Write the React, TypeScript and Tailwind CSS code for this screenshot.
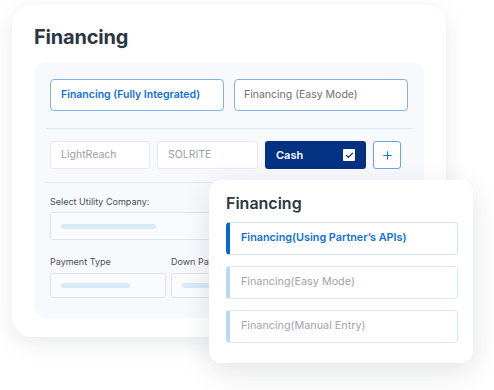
import { Check, Plus } from "lucide-react";

function Field({ className, bar }: { className: string; bar: string }) {
  return (
    <div
      className={`flex items-center rounded-[3px] border border-[#dfe3ea] bg-[#fafbfd] pl-[10px] ${className}`}
    >
      <div className={`h-[5px] rounded-full bg-[#d6eaf8] ${bar}`} />
    </div>
  );
}

function Option({ label, active }: { label: string; active?: boolean }) {
  return (
    <div
      className={`flex h-[33px] items-center rounded-[4px] border border-l-4 pl-[11px] text-[10.8px] ${
        active
          ? "border-[#d3e4f5] border-l-[#0a66d6] font-semibold text-[#1170d8]"
          : "border-[#dde9f5] border-l-[#b9d9f4] text-[#a0a5ad]"
      }`}
    >
      {label}
    </div>
  );
}

export default function App() {
  return (
    <div className="relative h-[390px] w-[494px] overflow-hidden bg-white font-['Inter',sans-serif]">
      <div className="ml-3 mt-[5px] h-[332px] w-[434px] rounded-[20px] bg-white px-[22px] pt-[19px] shadow-[0_6px_22px_rgba(30,40,60,0.10)]">
        <h1 className="text-[20px] font-bold leading-[26px] tracking-[-0.2px] text-[#2b3742]">
          Financing
        </h1>
        <div className="mt-[12px] h-[256px] w-[390px] rounded-[12px] bg-[#f7f9fd] px-3 pt-[17px]">
          <div className="flex gap-[10px] px-1">
            <div className="flex h-[32px] w-[174px] items-center rounded-[4px] border border-[#7fb2e6] bg-white pl-[10px] text-[10.5px] font-semibold text-[#1170d8]">
              Financing (Fully Integrated)
            </div>
            <div className="flex h-[32px] w-[174px] items-center rounded-[4px] border border-[#7fb2e6] bg-white pl-[9px] text-[10.5px] text-[#6b7077]">
              Financing (Easy Mode)
            </div>
          </div>
          <div className="mt-[17px] h-px w-[367px] bg-[#dbe9f6]" />
          <div className="mt-[12px] flex gap-[7px] px-1">
            <div className="flex h-[28px] w-[100px] items-center rounded-[3px] border border-[#e6e9ee] bg-white pl-[10px] text-[10.5px] text-[#9aa0a8]">
              LightReach
            </div>
            <div className="flex h-[28px] w-[101px] items-center rounded-[3px] border border-[#e6e9ee] bg-white pl-[10px] text-[10.5px] text-[#9aa0a8]">
              SOLRITE
            </div>
            <div className="flex h-[28px] w-[101px] items-center justify-between rounded-[3px] bg-[#043283] pl-[11px] pr-[11px] text-[11px] font-semibold text-white">
              Cash
              <span className="flex h-[12px] w-[12px] items-center justify-center rounded-[1px] bg-white">
                <Check size={9} strokeWidth={3} color="#043283" />
              </span>
            </div>
            <div className="flex h-[28px] w-[28px] items-center justify-center rounded-[3px] border border-[#6aa6e6] bg-white">
              <Plus size={13} strokeWidth={1.8} color="#1170d8" />
            </div>
          </div>
          <div className="mt-[13px] h-px w-[367px] bg-[#dbe9f6]" />
          <div className="px-1">
            <div className="mt-[13px] text-[9px] leading-[12px] text-[#4a4f56]">
              Select Utility Company:
            </div>
            <Field className="mt-[4px] h-[28px] w-[358px]" bar="w-[95px]" />
            <div className="mt-[16px] flex gap-[5px]">
              <div className="w-[116px]">
                <div className="text-[9px] leading-[12px] text-[#4a4f56]">Payment Type</div>
                <Field className="mt-[5px] h-[25px] w-[116px]" bar="w-[69px]" />
              </div>
              <div className="w-[116px]">
                <div className="text-[9px] leading-[12px] text-[#4a4f56]">Down Payment</div>
                <Field className="mt-[5px] h-[25px] w-[116px]" bar="w-[69px]" />
              </div>
              <div className="w-[116px]">
                <div className="text-[9px] leading-[12px] text-[#4a4f56]">Amount</div>
                <Field className="mt-[5px] h-[25px] w-[116px]" bar="w-[69px]" />
              </div>
            </div>
          </div>
        </div>
      </div>

      <div className="absolute left-[209px] top-[180px] h-[183px] w-[264px] rounded-[12px] bg-white px-[17px] pt-[12px] shadow-[0_8px_28px_rgba(30,40,60,0.13)]">
        <h2 className="text-[16px] font-semibold leading-[22px] text-[#2b3742]">Financing</h2>
        <div className="mt-[8px] flex w-[232px] flex-col gap-[11px]">
          <Option label="Financing(Using Partner’s APIs)" active />
          <Option label="Financing(Easy Mode)" />
          <Option label="Financing(Manual Entry)" />
        </div>
      </div>
    </div>
  );
}
